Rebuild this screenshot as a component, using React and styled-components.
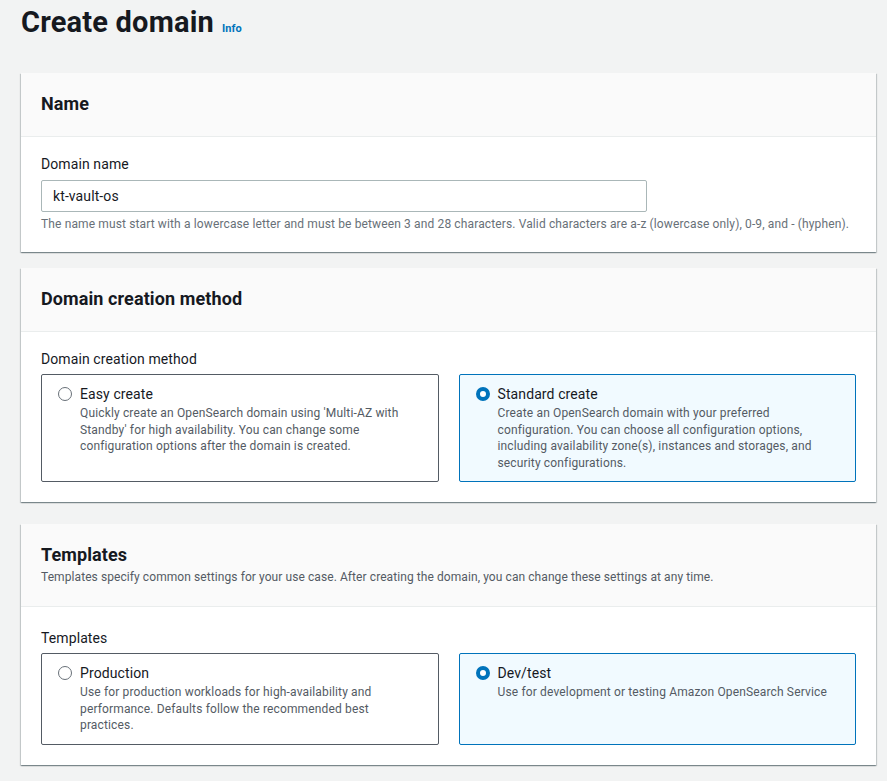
import styled, { createGlobalStyle } from 'styled-components'

const GlobalStyle = createGlobalStyle`
  html, body {
    margin: 0;
    background: #f2f3f3;
    font-family: Roboto, "Liberation Sans", sans-serif;
    color: #16191f;
  }
`

const Page = styled.div`
  padding: 0 11px 16px 21px;
`

const TitleRow = styled.div`
  display: flex;
  align-items: baseline;
  gap: 8px;
  height: 46px;
  padding-top: 2px;
`

const PageTitle = styled.h1`
  margin: 0;
  font-size: 29px;
  font-weight: 700;
  line-height: 40px;
  letter-spacing: 0.2px;
`

const InfoLink = styled.a`
  font-size: 11px;
  font-weight: 700;
  color: #0073bb;
  text-decoration: none;
`

const Card = styled.section`
  background: #fff;
  margin-top: ${p => p.$top}px;
  box-shadow: 0 1px 1px 0 rgba(0, 28, 36, 0.3), 1px 1px 1px 0 rgba(0, 28, 36, 0.15), -1px 1px 1px 0 rgba(0, 28, 36, 0.15);
`

const CardHeader = styled.div`
  background: #fafafa;
  border-bottom: 1px solid #eaeded;
  padding: 19px 20px ${p => (p.$desc ? 21 : 20)}px;
`

const CardTitle = styled.h2`
  margin: 0;
  font-size: 18px;
  font-weight: 700;
  line-height: 24px;
  letter-spacing: 0.1px;
`

const CardDesc = styled.p`
  margin: 2px 0 0;
  font-size: 12px;
  line-height: 16px;
  letter-spacing: 0.08px;
  color: #545b64;
`

const CardBody = styled.div`
  padding: ${p => p.$top || 16}px 20px 20px;
`

const Label = styled.div`
  font-size: 14px;
  line-height: 22px;
  letter-spacing: 0.1px;
  margin-bottom: ${p => p.$gap}px;
`

const TextInput = styled.input`
  box-sizing: border-box;
  display: block;
  width: 606px;
  height: 32px;
  padding: 0 11px;
  border: 1px solid #aab7b8;
  border-radius: 2px;
  font-family: inherit;
  font-size: 14px;
  letter-spacing: 0.1px;
  color: #16191f;
  outline: none;
`

const Hint = styled.div`
  margin-top: 4px;
  font-size: 12px;
  line-height: 16px;
  letter-spacing: 0.13px;
  color: #687078;
`

const Tiles = styled.div`
  display: grid;
  grid-template-columns: 1fr 1fr;
  gap: 20px;
`

const Tile = styled.label`
  display: flex;
  gap: 8px;
  padding: 8px 16px 10px;
  border: 1px solid ${p => (p.$on ? '#0073bb' : '#545b64')};
  background: ${p => (p.$on ? '#f1faff' : '#fff')};
  border-radius: 2px;
`

const Radio = styled.span`
  box-sizing: border-box;
  flex: none;
  width: 14px;
  height: 14px;
  margin-top: 4px;
  border-radius: 50%;
  border: ${p => (p.$on ? '4px solid #0073bb' : '1px solid #687078')};
  background: #fff;
`

const TileText = styled.div`
  display: flex;
  flex-direction: column;
`

const TileTitle = styled.span`
  font-size: 14px;
  line-height: 22px;
  letter-spacing: 0.1px;
`

const TileDesc = styled.span`
  font-size: 12px;
  line-height: 16.5px;
  letter-spacing: 0.15px;
  color: #545b64;
`

function Option({ on, title, desc }) {
  return (
    <Tile $on={on}>
      <Radio $on={on} />
      <TileText>
        <TileTitle>{title}</TileTitle>
        <TileDesc>{desc}</TileDesc>
      </TileText>
    </Tile>
  )
}

export default function App() {
  return (
    <Page>
      <GlobalStyle />
      <TitleRow>
        <PageTitle>Create domain</PageTitle>
        <InfoLink href="#">Info</InfoLink>
      </TitleRow>

      <Card $top={25}>
        <CardHeader>
          <CardTitle>Name</CardTitle>
        </CardHeader>
        <CardBody>
          <Label $gap={5}>Domain name</Label>
          <TextInput defaultValue="kt-vault-os" />
          <Hint>The name must start with a lowercase letter and must be between 3 and 28 characters. Valid characters are a-z (lowercase only), 0-9, and - (hyphen).</Hint>
        </CardBody>
      </Card>

      <Card $top={16}>
        <CardHeader>
          <CardTitle>Domain creation method</CardTitle>
        </CardHeader>
        <CardBody>
          <Label $gap={4}>Domain creation method</Label>
          <Tiles>
            <Option
              title="Easy create"
              desc="Quickly create an OpenSearch domain using 'Multi-AZ with Standby' for high availability. You can change some configuration options after the domain is created."
            />
            <Option
              on
              title="Standard create"
              desc="Create an OpenSearch domain with your preferred configuration. You can choose all configuration options, including availability zone(s), instances and storages, and security configurations."
            />
          </Tiles>
        </CardBody>
      </Card>

      <Card $top={22}>
        <CardHeader $desc>
          <CardTitle>Templates</CardTitle>
          <CardDesc>Templates specify common settings for your use case. After creating the domain, you can change these settings at any time.</CardDesc>
        </CardHeader>
        <CardBody $top={20}>
          <Label $gap={4}>Templates</Label>
          <Tiles>
            <Option
              title="Production"
              desc="Use for production workloads for high-availability and performance. Defaults follow the recommended best practices."
            />
            <Option
              on
              title="Dev/test"
              desc="Use for development or testing Amazon OpenSearch Service"
            />
          </Tiles>
        </CardBody>
      </Card>
    </Page>
  )
}
